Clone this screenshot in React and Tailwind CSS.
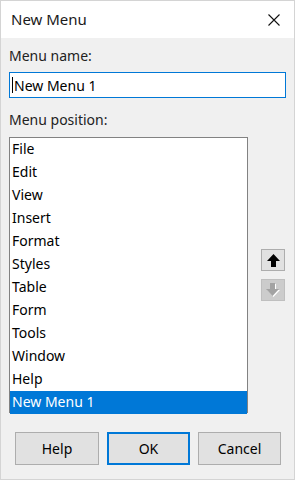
const items = ['File', 'Edit', 'View', 'Insert', 'Format', 'Styles', 'Table', 'Form', 'Tools', 'Window', 'Help', 'New Menu 1']

function UpArrow({ fill }) {
  return (
    <svg width="13" height="13" viewBox="0 0 13 13">
      <path d="M6.5 0 L13 7 L9 7 L9 13 L4 13 L4 7 L0 7 Z" fill={fill} />
    </svg>
  )
}

function DownArrow() {
  return (
    <svg width="14" height="14" viewBox="0 0 14 14">
      <path d="M7.5 14 L14 7 L10 7 L10 1 L5 1 L5 7 L1 7 Z" fill="#ffffff" />
      <path d="M6.5 13 L13 6 L9 6 L9 0 L4 0 L4 6 L0 6 Z" fill="#a3a3a3" />
    </svg>
  )
}

export default function App() {
  const font = { fontFamily: '"Noto Sans", "Open Sans", sans-serif' }
  return (
    <div style={font} className="w-[295px] h-[480px] bg-[#f0f0f0] flex flex-col border border-[#d4d4d4] text-black">
      <div className="h-[37px] bg-white flex items-center justify-between pl-[10px] pr-[14px] shrink-0">
        <span className="text-[15px] text-[#1a1a1a]">New Menu</span>
        <svg width="12" height="12" viewBox="0 0 12 12">
          <path d="M0.5 0.5 L11.5 11.5 M11.5 0.5 L0.5 11.5" stroke="#111" strokeWidth="1.1" />
        </svg>
      </div>

      <div className="flex flex-col px-[8px] pt-[8px]">
        <div className="text-[14px] leading-[20px] text-[#222]">Menu name:</div>
        <div className="mt-[6px] h-[26px] w-[277px] bg-white border border-[#0078d7] flex items-center pl-[2px] text-[14px]">
          <span className="w-px h-[16px] bg-black mr-[1px]" />
          <span>New Menu 1</span>
        </div>

        <div className="mt-[12px] text-[14px] leading-[20px] text-[#222]">Menu position:</div>
        <div className="mt-[7px] flex">
          <div className="w-[239px] h-[276px] bg-white border border-[#828282] flex flex-col">
            {items.map((it, i) => (
              <div
                key={it}
                className={`h-[23px] pl-[2px] pb-[2px] flex items-center text-[14px] ${i === items.length - 1 ? 'bg-[#0078d7] text-white' : ''}`}
              >
                {it}
              </div>
            ))}
          </div>
          <div className="ml-[13px] flex flex-col justify-center gap-[8px]">
            <div className="w-[24px] h-[22px] bg-[#e1e1e1] border border-[#adadad] flex items-center justify-center">
              <UpArrow fill="#000" />
            </div>
            <div className="w-[24px] h-[22px] bg-[#cccccc] border border-[#bfbfbf] flex items-center justify-center">
              <DownArrow />
            </div>
          </div>
        </div>

        <div className="mt-[19px] pl-[6px] flex gap-[8px] text-[14px]">
          <button className="w-[84px] h-[33px] bg-[#e1e1e1] border border-[#adadad]">Help</button>
          <button className="w-[83px] h-[33px] bg-[#e1e1e1] border-2 border-[#0078d7]">OK</button>
          <button className="w-[83px] h-[33px] bg-[#e1e1e1] border border-[#adadad]">Cancel</button>
        </div>
      </div>
    </div>
  )
}
